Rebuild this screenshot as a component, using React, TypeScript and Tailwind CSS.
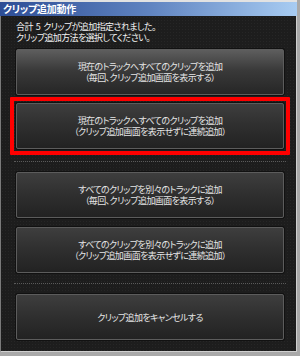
import React from 'react';

const jp = "font-['MS_UI_Gothic','Noto_Sans_CJK_JP',sans-serif] [font-feature-settings:'palt']";

interface ActionButtonProps {
    lines: string[];
    bright?: boolean;
}

const ActionButton: React.FC<ActionButtonProps> = ({ lines, bright }) => (
    <button
        className={`w-[268px] h-[46px] flex flex-col items-center justify-center rounded-[2px] border border-[#5c5c5c] shadow-[0_0_0_1px_#111] text-[#e6e6e6] text-[9px] leading-[11px] tracking-[-0.6px] ${jp} ${bright
            ? 'bg-[linear-gradient(#5e5e5e,#3a3a3a_45%,#262626)]'
            : 'bg-[linear-gradient(#3e3e3e,#303030_45%,#222222)]'
            }`}
    >
        {lines.map(l => (
            <span key={l} className="block whitespace-nowrap">{l}</span>
        ))}
    </button>
);

const Divider = () => (
    <div className="w-[272px] -ml-[2px] border-t border-dotted border-[#5a5a5a]" />
);

export default function App() {
    return (
        <div className="w-[300px] h-[356px] bg-[#a9a9a9] pr-[3px] pb-[4px] flex flex-col">
            {/* Title bar */}
            <div className="h-[16px] border-t-2 border-[#e2e2e2] bg-[linear-gradient(90deg,#2d4d95,#5f83c0_50%,#a8ccf2)] flex items-center pl-[3px]">
                <span className={`text-white font-bold text-[10px] leading-none tracking-[-0.3px] ${jp}`}>クリップ追加動作</span>
            </div>

            {/* Body */}
            <div className="flex-1 bg-[#1d1d1d] bg-[radial-gradient(#262626_0.6px,transparent_0.8px)] bg-[length:3px_3px] border-l border-[#7a7a7a] border-r border-b border-r-[#d0d0d0] border-b-[#d0d0d0] pl-[15px] flex flex-col">
                <div className={`pt-[5px] text-[#f2f2f2] text-[9px] leading-[11px] tracking-[-0.6px] ${jp}`}>
                    <p>合計<span className="mx-[3px]">5</span>クリップが追加指定されました。</p>
                    <p>クリップ追加方法を選択してください。</p>
                </div>

                <div className="mt-[6px]">
                    <ActionButton bright lines={['現在のトラックへすべてのクリップを追加', '（毎回、クリップ追加画面を表示する）']} />
                </div>

                {/* Highlighted option */}
                <div className="mt-[2px] -ml-[6px] w-[280px] border-[4px] border-[#ff0000] p-[2px] rounded-[1px]">
                    <ActionButton lines={['現在のトラックへすべてのクリップを追加', '（クリップ追加画面を表示せずに連続追加）']} />
                </div>

                <div className="mt-[6px]"><Divider /></div>

                <div className="mt-[10px] flex flex-col gap-[9px]">
                    <ActionButton lines={['すべてのクリップを別々のトラックに追加', '（毎回、クリップ追加画面を表示する）']} />
                    <ActionButton lines={['すべてのクリップを別々のトラックに追加', '（クリップ追加画面を表示せずに連続追加）']} />
                </div>

                <div className="mt-[10px]"><Divider /></div>

                <div className="mt-[10px]">
                    <ActionButton lines={['クリップ追加をキャンセルする']} />
                </div>
            </div>
        </div>
    );
}
